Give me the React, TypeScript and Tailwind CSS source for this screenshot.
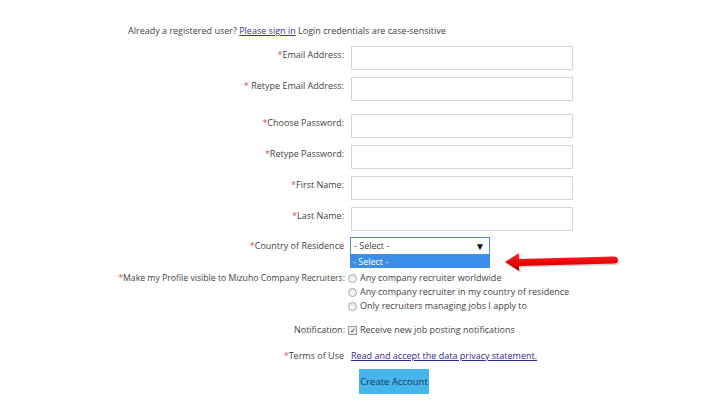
import React from "react";

const Req = () => <span className="text-[#d9534f]">*</span>;

const Field = ({ label, space, className = "" }: { label: string; space?: boolean; className?: string }) => (
  <div className={`flex ${className}`}>
    <label className="w-[241px] shrink-0 pt-[3px] pr-[7px] text-right">
      <Req />
      {space ? " " : ""}
      {label}
    </label>
    <input className="h-[24px] w-[222px] border border-[#d4d4d4] bg-white outline-none" />
  </div>
);

const Radio = ({ text }: { text: string }) => (
  <div className="flex h-[14px] items-center gap-[3px]">
    <span className="h-[9px] w-[9px] rounded-full border border-[#a8a8a8] bg-gradient-to-b from-[#e8e8e8] to-[#fafafa]" />
    <span>{text}</span>
  </div>
);

const Arrow = () => (
  <svg width="116" height="22" viewBox="0 0 116 22" className="absolute left-[154px] top-[14px]">
    <defs>
      <linearGradient id="ar" x1="0" y1="0" x2="0" y2="1">
        <stop offset="0" stopColor="#ff3030" />
        <stop offset="0.6" stopColor="#e80000" />
        <stop offset="1" stopColor="#a80000" />
      </linearGradient>
    </defs>
    <path
      d="M1 11 L15 2 L15 8 L110 5.5 Q114 5.5 114 9 Q114 12.5 110 12.5 L15 15 L15 20 Z"
      fill="#7a7a7a"
      opacity="0.35"
      transform="translate(1.5 1.5)"
    />
    <path
      d="M1 11 L15 2 L15 8 L110 5.5 Q114 5.5 114 9 Q114 12.5 110 12.5 L15 15 L15 20 Z"
      fill="url(#ar)"
    />
  </svg>
);

export default function App() {
  return (
    <div className="min-h-[410px] bg-white pl-[110px] pt-[25px] font-['Open_Sans',sans-serif] text-[9px] leading-[12px] text-[#3f3f3f]">
      <div className="pl-[18px]">
        Already a registered user?{" "}
        <a href="#" className="text-[#3f3196] underline">
          Please sign in
        </a>{" "}
        Login credentials are case-sensitive
      </div>

      <Field label="Email Address:" className="mt-[9px]" />
      <Field label="Retype Email Address:" space className="mt-[7px]" />
      <Field label="Choose Password:" className="mt-[13px]" />
      <Field label="Retype Password:" className="mt-[7px]" />
      <Field label="First Name:" className="mt-[7px]" />
      <Field label="Last Name:" className="mt-[7px]" />

      <div className="relative mt-[6px] flex">
        <label className="w-[240px] shrink-0 pr-[6px] pt-[3px] text-right">
          <Req />
          Country of Residence
        </label>
        <div className="relative">
          <div className="flex h-[18px] w-[140px] items-center justify-between border border-[#4a90d9] bg-white pl-[3px] pr-[4px]">
            <span>- Select -</span>
            <span className="text-[10px] text-[#111]">▼</span>
          </div>
          <div className="absolute left-0 top-[18px] h-[13px] w-[140px] bg-[#3b8ee8] pl-[3px] leading-[13px] text-white">
            - Select -
          </div>
          <Arrow />
        </div>
      </div>

      <div className="mt-[16px] flex">
        <label className="w-[238px] shrink-0 whitespace-nowrap pr-[3px] pt-[1px] text-right text-[8.7px]">
          <Req />
          Make my Profile visible to Mizuho Company Recruiters:
        </label>
        <div className="flex flex-col">
          <Radio text="Any company recruiter worldwide" />
          <Radio text="Any company recruiter in my country of residence" />
          <Radio text="Only recruiters managing jobs I apply to" />
        </div>
      </div>

      <div className="mt-[11px] flex items-center">
        <label className="w-[238px] shrink-0 pr-[3px] text-right">Notification:</label>
        <div className="flex items-center gap-[3px]">
          <span className="flex h-[9px] w-[9px] items-center justify-center border border-[#9a9a9a] bg-[#ececec] text-[7px] leading-none text-[#333]">
            ✓
          </span>
          <span>Receive new job posting notifications</span>
        </div>
      </div>

      <div className="mt-[14px] flex items-center">
        <label className="w-[241px] shrink-0 pr-[7px] text-right">
          <Req />
          Terms of Use
        </label>
        <a href="#" className="text-[#2e2a8c] underline">
          Read and accept the data privacy statement.
        </a>
      </div>

      <div className="mt-[7px] pl-[249px]">
        <button className="h-[25px] w-[70px] bg-[#45b5ec] text-[9.5px] text-[#1d3552]">Create Account</button>
      </div>
    </div>
  );
}
